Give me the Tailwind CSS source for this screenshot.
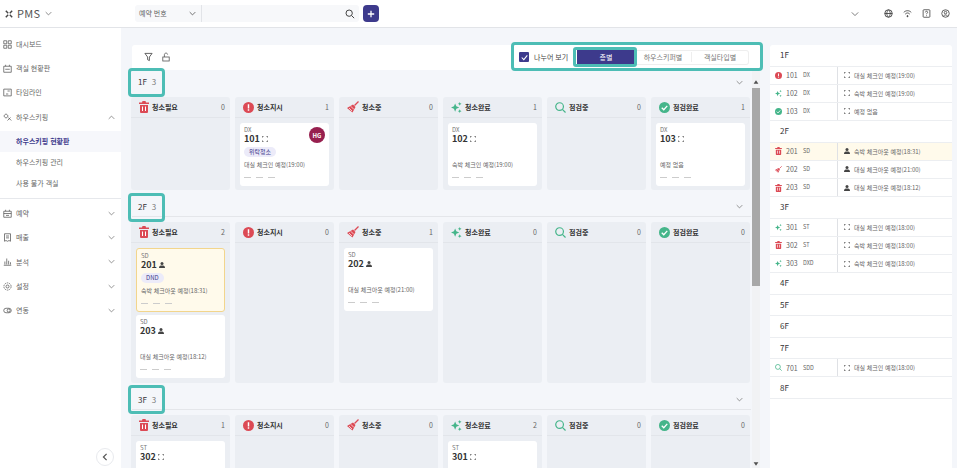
<!DOCTYPE html>
<html lang="ko">
<head>
    <meta charset="UTF-8">
    <title>PMS</title>
    <script src="https://cdn.jsdelivr.net/npm/@tailwindcss/browser@4"></script>
</head>
<body class="w-[957px] h-[472px] overflow-hidden bg-white text-[#333] font-['Noto_Sans_CJK_KR','Noto_Sans',sans-serif]">
    <!-- Top bar -->
    <header class="h-[28px] flex items-center border-b border-[#e2e4e8] bg-white">
        <div class="w-[135px] flex items-center pl-[5px] gap-[4px]">
            <svg class="w-[8px] h-[8px] text-[#444]" viewBox="0 0 10 10" fill="none" stroke="currentColor" stroke-width="1.8"><path d="M1 1l3 3M9 1L6 4M1 9l3-3M9 9L6 6"/></svg>
            <span class="text-[11px] tracking-wide text-[#555]">PMS</span>
            <svg class="w-[7px] h-[7px] ml-[1px] text-[#777]" viewBox="0 0 10 10" fill="none" stroke="currentColor" stroke-width="1.2"><path d="M1 3l4 4 4-4"/></svg>
        </div>
        <div class="w-[224px] h-[17px] flex items-center bg-[#f7f8fa] rounded-[3px]">
            <div class="w-[67px] h-full flex items-center justify-between pl-[4px] pr-[5px] border-r border-[#e2e4e8]">
                <span class="text-[7px] text-[#666]">예약 번호</span>
                <svg class="w-[7px] h-[7px] text-[#666]" viewBox="0 0 10 10" fill="none" stroke="currentColor" stroke-width="1.3"><path d="M1 3l4 4 4-4"/></svg>
            </div>
            <svg class="ml-auto mr-[4px] w-[10px] h-[10px] text-[#444]" viewBox="0 0 12 12" fill="none" stroke="currentColor" stroke-width="1.2"><circle cx="5" cy="5" r="3.8"/><path d="M8 8l3 3"/></svg>
        </div>
        <div class="ml-[4px] w-[16px] h-[17px] rounded-[4px] bg-[#3d3a8c] text-white flex items-center justify-center">
            <svg class="w-[8px] h-[8px]" viewBox="0 0 10 10" fill="none" stroke="currentColor" stroke-width="1.6"><path d="M5 1v8M1 5h8"/></svg>
        </div>
        <svg class="ml-[472px] w-[8px] h-[8px] text-[#777]" viewBox="0 0 10 10" fill="none" stroke="currentColor" stroke-width="1.2"><path d="M1 3l4 4 4-4"/></svg>
        <div class="ml-[25px] flex items-center gap-[10px] text-[#444]">
            <svg class="w-[9px] h-[9px]" viewBox="0 0 12 12" fill="none" stroke="currentColor" stroke-width="1.2"><circle cx="6" cy="6" r="5"/><path d="M1 6h10M6 1c-3 3-3 7 0 10M6 1c3 3 3 7 0 10"/></svg>
            <svg class="w-[9px] h-[9px]" viewBox="0 0 12 12" fill="none" stroke="currentColor" stroke-width="1.2"><path d="M1 4.500c3-3 7-3 10 0M3 6.800c2-2 4-2 6 0"/><circle cx="6" cy="9.500" r=".8" fill="currentColor"/></svg>
            <svg class="w-[9px] h-[9px]" viewBox="0 0 12 12" fill="none" stroke="currentColor" stroke-width="1.1"><rect x="1.500" y="1" width="9" height="10" rx="1"/><path d="M4.500 4.500c0-2 3-2 3 0 0 1-1.500 1-1.500 2.500M6 8.500v1"/></svg>
            <svg class="w-[9px] h-[9px]" viewBox="0 0 12 12" fill="none" stroke="currentColor" stroke-width="1.1"><circle cx="6" cy="6" r="5"/><circle cx="6" cy="4.800" r="1.700"/><path d="M3 9.500c1.500-2 4.500-2 6 0"/></svg>
        </div>
    </header>

    <div class="flex h-[441px]">
        <!-- Sidebar -->
        <aside class="relative w-[121px] shrink-0 bg-white text-[7px] text-[#666]">
            <nav id="nav" class="pt-[4px]"></nav>
            <button class="absolute left-[96px] bottom-[3px] w-[18px] h-[18px] rounded-full border border-[#e8eaee] bg-white flex items-center justify-center text-[#555]">
                <svg class="w-[8px] h-[8px]" viewBox="0 0 10 10" fill="none" stroke="currentColor" stroke-width="1.5"><path d="M7 1L3 5l4 4"/></svg>
            </button>
        </aside>

        <!-- Main -->
        <main class="relative flex-1 h-[440px] overflow-hidden bg-[#f4f6fa] pl-[11px] pt-[17px] flex gap-[8px]">
            <div class="relative w-[630px] shrink-0">
                <!-- Toolbar -->
                <div class="h-[25px] pb-[1px] bg-white rounded-t-[3px] flex items-center pl-[12px] gap-[9px] text-[#555]">
                    <svg class="w-[9px] h-[10px]" viewBox="0 0 10 10" fill="none" stroke="currentColor" stroke-width="1"><path d="M1 1h8L6 5v4L4 8V5z"/></svg>
                    <svg class="w-[8px] h-[10px]" viewBox="0 0 10 12" fill="none" stroke="currentColor" stroke-width="1"><rect x="1" y="6" width="8" height="5"/><path d="M3 6V3c0-2.500 4-2.500 4 0"/></svg>
                    <div class="ml-auto mr-[13px] w-[237px] flex items-center relative text-[7px]">
                        <span class="w-[10px] h-[10px] bg-[#3d3a8c] rounded-[1px] text-white flex items-center justify-center ml-[7px] shrink-0">
                            <svg class="w-[7px] h-[7px]" viewBox="0 0 10 10" fill="none" stroke="currentColor" stroke-width="1.500"><path d="M1 5l3 3 5-6"/></svg>
                        </span>
                        <span class="ml-[5px] w-[34px] shrink-0 whitespace-nowrap text-[#444]">나누어 보기</span>
                        <div class="ml-[9px] flex-1 h-[15px] flex items-center border-[#eee] border-y border-r rounded-r-[3px] text-[#777]">
                            <span class="w-[58px] h-[15px] bg-[#3d3a8c] text-white flex items-center justify-center">층별</span>
                            <span class="w-[57px] text-center border-r border-[#eee]">하우스키퍼별</span>
                            <span class="flex-1 text-center">객실타입별</span>
                        </div>
                        <!-- highlight around active tab -->
                        <span class="absolute left-[61px] top-[-3px] w-[64px] h-[20px] border-[3px] border-[#4dbdb5] rounded-[3px]"></span>
                    </div>
                </div>
                <div id="board" class="pr-[11px]"></div>
                <!-- Scrollbar -->
                <div class="absolute right-[2px] top-[25px] bottom-0 w-[8px] bg-[#f1f2f4] flex flex-col items-center">
                    <svg class="w-[6px] h-[6px] mt-[9px] text-[#505050]" viewBox="0 0 10 10" fill="currentColor"><path d="M5 2l4 6H1z"/></svg>
                    <div class="w-full h-[198px] mt-[3px] bg-[#a8a8a8]"></div>
                    <svg class="w-[6px] h-[6px] mt-auto mb-[1px] text-[#505050]" viewBox="0 0 10 10" fill="currentColor"><path d="M5 8l4-6H1z"/></svg>
                </div>
            </div>

            <!-- Floor summary -->
            <div id="summary" class="w-[182px] h-[423px] shrink-0 bg-white rounded-t-[3px] text-[#666]"></div>

            <!-- Annotation box round the toolbar controls -->
            <div class="absolute left-[390px] top-[14px] w-[252px] h-[29px] border-[3px] border-[#4dbdb5] rounded-[4px]"></div>
        </main>
    </div>

    <script>
        const icons = {
            trash: '<svg class="w-[10px] h-[12px]" viewBox="0 0 10 12"><path fill="#dc4a55" d="M3.500 0h3l.5 1.500H10V3H0V1.500h3zM1 4h8v7a1 1 0 01-1 1H2a1 1 0 01-1-1z"/><path stroke="#fff" d="M3.500 5.500v4.500M6.500 5.500v4.500"/></svg>',
            alert: '<svg class="w-[11px] h-[11px]" viewBox="0 0 12 12"><circle cx="6" cy="6" r="6" fill="#dc4a55"/><path stroke="#fff" stroke-width="1.600" d="M6 2.500v4.500M6 8v1.600"/></svg>',
            broom: '<svg class="w-[12px] h-[12px]" viewBox="0 0 12 12" fill="none"><path stroke="#dc4a55" stroke-width="1.300" d="M11.500.5L7.500 4.500"/><path fill="#dc4a55" d="M6 3.500L8.500 6 5.500 11.500 0 7z"/><path stroke="#fff" stroke-width=".7" d="M3.800 5.300L7 8.500M2 7L5 10"/></svg>',
            sparkle: '<svg class="w-[11px] h-[11px]" viewBox="0 0 12 12" fill="#45b58a"><path d="M4.500 1.500l1.300 3.200L9 6 5.800 7.300 4.500 10.500 3.200 7.300 0 6l3.200-1.300z"/><path d="M9.500 0l.6 1.400 1.400.6-1.400.6-.6 1.400-.6-1.400L7.500 2l1.400-.6zM9.500 8l.6 1.400 1.400.6-1.400.6-.6 1.400-.6-1.400-1.400-.6 1.400-.6z"/></svg>',
            search: '<svg class="w-[11px] h-[11px]" viewBox="0 0 12 12" fill="none" stroke="#45b58a" stroke-width="1.300"><circle cx="5" cy="5" r="4.200"/><path d="M8 8l3.500 3.500"/></svg>',
            check: '<svg class="w-[11px] h-[11px]" viewBox="0 0 12 12"><circle cx="6" cy="6" r="6" fill="#45b58a"/><path fill="none" stroke="#fff" stroke-width="1.400" d="M3 6.200l2.200 2.200L9 4.200"/></svg>',
        };
        const smallIcons = {
            trash: icons.trash.replace('w-[10px] h-[12px]', 'w-[7px] h-[8px]'),
            alert: icons.alert.replace('w-[11px] h-[11px]', 'w-[7px] h-[7px]'),
            broom: icons.broom.replace('w-[12px] h-[12px]', 'w-[7px] h-[7px]'),
            sparkle: icons.sparkle.replace('w-[11px] h-[11px]', 'w-[7px] h-[7px]'),
            search: icons.search.replace('w-[11px] h-[11px]', 'w-[7px] h-[7px]'),
            check: icons.check.replace('w-[11px] h-[11px]', 'w-[7px] h-[7px]'),
        };
        const corners = '<svg class="w-[6px] h-[6px] shrink-0 text-[#444]" viewBox="0 0 6 6" fill="none" stroke="currentColor" stroke-width=".8"><path d="M.4 1.500V.4h1.100M4.500.4h1.100v1.100M5.600 4.500v1.100H4.500M1.500 5.600H.4V4.500"/></svg>';
        const person = '<svg class="w-[6px] h-[6px] shrink-0 text-[#444]" viewBox="0 0 6 6" fill="currentColor"><circle cx="3" cy="1.600" r="1.500"/><path d="M0 6c0-2 1-2.500 3-2.500S6 4 6 6z"/></svg>';
        const chevron = '<svg class="w-[7px] h-[7px] text-[#777]" viewBox="0 0 10 10" fill="none" stroke="currentColor" stroke-width="1.100"><path d="M1 3l4 4 4-4"/></svg>';
        const columns = [
            ['trash', '청소필요'], ['alert', '청소지시'], ['broom', '청소중'],
            ['sparkle', '청소완료'], ['search', '점검중'], ['check', '점검완료'],
        ];

        // sidebar
        const navItems = [
            ['대시보드', '<path d="M1 1h4v4H1zM7 1h4v4H7zM1 7h4v4H1zM7 7h4v4H7z"/>', ''],
            ['객실 현황판', '<path d="M1 3h10v8H1zM3.500 1v2M8.500 1v2M3 7h6"/>', ''],
            ['타임라인', '<path d="M1 1.500h10v9H1zM6 4h3M4 8h3"/>', ''],
            ['하우스키핑', '<path d="M1 4l3-3 3 3-3 3zM7 6l4 4M6 10l4-4"/>', 'up'],
        ];
        const navItems2 = [
            ['예약', '<path d="M1 3h10v8H1zM3.500 1v2M8.500 1v2M1 6h10M4 8.500h4"/>'],
            ['매출', '<path d="M2 1h8v10l-2-1-2 1-2-1-2 1zM4 4h4M4 6.500h4"/>'],
            ['분석', '<path d="M1 11h10M2.500 10V6M5 10V2M7.500 10V5M10 10V7"/>'],
            ['설정', '<circle cx="6" cy="6" r="2"/><circle cx="6" cy="6" r="4.800" stroke-dasharray="2 1"/>'],
            ['연동', '<rect x="1" y="3" width="10" height="6" rx="3"/><circle cx="7.500" cy="6" r="2"/>'],
        ];
        const navRow = (label, path, caret) => `
            <div class="h-[24.300px] flex items-center pl-[3px] pr-[6px] gap-[4px]">
                <svg class="w-[9px] h-[9px] text-[#555]" viewBox="0 0 12 12" fill="none" stroke="currentColor">${path}</svg>
                <span>${label}</span>
                <span class="ml-auto ${caret === 'up' ? 'rotate-180' : ''}">${caret === '' ? '' : chevron}</span>
            </div>`;
        document.getElementById('nav').innerHTML =
            navItems.map(i => navRow(i[0], i[1], i[2])).join('') +
            `<div class="h-[21px] mt-[2px] pl-[16px] flex items-center bg-[#f6f7fb] font-bold text-[#3d3a8c]">하우스키핑 현황판</div>
            <div class="h-[21px] pl-[16px] flex items-center">하우스키핑 관리</div>
            <div class="h-[21px] pl-[16px] flex items-center">사용 불가 객실</div>
            <div class="border-t border-[#e6e8ec] mt-[4px] mb-[2px]"></div>` +
            navItems2.map(i => navRow(i[0], i[1], 'down')).join('');

        // board
        const card = c => `
            <div class="relative mb-[3px] px-[4px] pt-[3px] rounded-[3px] flex flex-col ${c.stay ? 'h-[64px] bg-[#fffaeb] border border-[#f2d58c]' : 'h-[63px] bg-white'}">
                <span class="text-[6px] leading-[7px] text-[#777]">${c.type}</span>
                <span class="flex items-center gap-[2px] text-[9px] leading-[11px] font-bold text-[#333]">${c.no} ${c.person ? person : corners}</span>
                <span class="flex h-[10px] mt-[3px]">${c.tag ? `<span class="h-[10px] leading-[10px] px-[5px] rounded-full bg-[#ecebf9] text-[#3d3a8c] text-[6px]">${c.tag}</span>` : ''}</span>
                <span class="mt-[3px] text-[6px] leading-[9px] text-[#666] whitespace-nowrap">${c.text}</span>
                <span class="mt-[8px] flex gap-[5px]"><i class="w-[7px] h-px bg-[#ccc]"></i><i class="w-[7px] h-px bg-[#ccc]"></i><i class="w-[7px] h-px bg-[#ccc]"></i></span>
                ${c.avatar ? `<span class="absolute right-[4px] top-[4px] w-[16px] h-[16px] rounded-full bg-[#97204f] text-white text-[6px] font-bold flex items-center justify-center">${c.avatar}</span>` : ''}
            </div>`;
        const floors = [
            { name: '1F', head: 'h-[22px] pt-[2px]', colH: 'h-[93px]', mark: 'top-[-2px]', counts: [0, 1, 0, 1, 0, 1], cards: {
                1: [{ type: 'DX', no: 101, tag: '위탁청소', text: '대실 체크인 예정(19:00)', avatar: 'HG' }],
                3: [{ type: 'DX', no: 102, text: '숙박 체크인 예정(19:00)' }],
                5: [{ type: 'DX', no: 103, text: '예정 없음' }],
            } },
            { name: '2F', head: 'h-[27px] pt-[7px] border-b border-[#e4e6ea]', colH: 'h-[161px]', mark: 'top-[3px]', counts: [2, 0, 1, 0, 0, 0], cards: {
                0: [{ type: 'SD', no: 201, person: 1, stay: 1, tag: 'DND', text: '숙박 체크아웃 예정(18:31)' },
                    { type: 'SD', no: 203, person: 1, text: '대실 체크아웃 예정(18:12)' }],
                2: [{ type: 'SD', no: 202, person: 1, text: '대실 체크아웃 예정(21:00)' }],
            } },
            // these two cards run past the fold, only type and number are in view
            { name: '3F', head: 'h-[27px] pt-[7px] border-b border-[#e4e6ea]', colH: 'h-[161px]', mark: 'top-[2px]', counts: [1, 0, 0, 2, 0, 0], cards: {
                0: [{ type: 'ST', no: 302, text: '' }],
                3: [{ type: 'ST', no: 301, text: '' }],
            } },
        ];
        document.getElementById('board').innerHTML = floors.map(f => `
            <section class="relative">
                <div class="flex items-center pl-[6px] pr-[8px] gap-[5px] text-[8px] ${f.head}">
                    <span class="text-[#333]">${f.name}</span><span class="text-[#777]">3</span>
                    <span class="ml-auto">${chevron}</span>
                </div>
                <span class="absolute left-[-4px] w-[37px] h-[29px] border-[3px] border-[#4dbdb5] rounded-[4px] ${f.mark}"></span>
                <div class="flex gap-[5px] mt-[5px] ml-[-1px] ${f.colH}">
                    ${columns.map((col, i) => `
                    <div class="w-[99px] shrink-0 rounded-[3px] bg-[#ebeef3]">
                        <div class="h-[21px] flex items-center pl-[8px] pr-[5px] gap-[3px] border-b border-[#e2e5ea]">
                            ${icons[col[0]]}
                            <span class="text-[7px] font-bold text-[#333]">${col[1]}</span>
                            <span class="ml-auto text-[7px] text-[#666]">${f.counts[i]}</span>
                        </div>
                        <div class="px-[5px] pt-[5px]">${(f.cards[i] || []).map(card).join('')}</div>
                    </div>`).join('')}
                </div>
            </section>`).join('');

        // floor summary
        const summary = [
            ['1F', [['alert', 101, 'DX', '대실 체크인 예정(19:00)'], ['sparkle', 102, 'DX', '숙박 체크인 예정(19:00)'], ['check', 103, 'DX', '예정 없음']]],
            ['2F', [['trash', 201, 'SD', '숙박 체크아웃 예정(18:31)', 1, 1], ['broom', 202, 'SD', '대실 체크아웃 예정(21:00)', 1], ['trash', 203, 'SD', '대실 체크아웃 예정(18:12)', 1]]],
            ['3F', [['sparkle', 301, 'ST', '대실 체크인 예정(18:00)'], ['trash', 302, 'ST', '숙박 체크인 예정(18:00)'], ['sparkle', 303, 'DXD', '숙박 체크인 예정(18:00)']]],
            ['4F', []], ['5F', []], ['6F', []],
            ['7F', [['search', 701, 'SDD', '대실 체크인 예정(18:00)']]],
            ['8F', []],
        ];
        document.getElementById('summary').innerHTML = summary.map(([name, rows]) => `
            <div class="h-[21.500px] flex items-center pl-[10px] text-[8px] text-[#333] border-b border-[#eceef1]">${name}</div>
            ${rows.map(r => `
            <div class="h-[18.200px] flex items-center border-b border-[#eceef1] ${r[5] ? 'bg-[#fffaeb]' : ''}">
                <span class="w-[68px] h-full flex items-center pl-[4px] border-r border-[#dfe1e5]">
                    <span class="w-[8px] flex justify-center">${smallIcons[r[0]]}</span>
                    <span class="ml-[4px] w-[13px] text-[7px]">${r[1]}</span>
                    <span class="ml-[4px] text-[5.500px]">${r[2]}</span>
                </span>
                <span class="ml-[6px] flex items-center gap-[4px] text-[6px] whitespace-nowrap">${r[4] ? person : corners}${r[3]}</span>
            </div>`).join('')}`).join('');
    </script>
</body>
</html>
